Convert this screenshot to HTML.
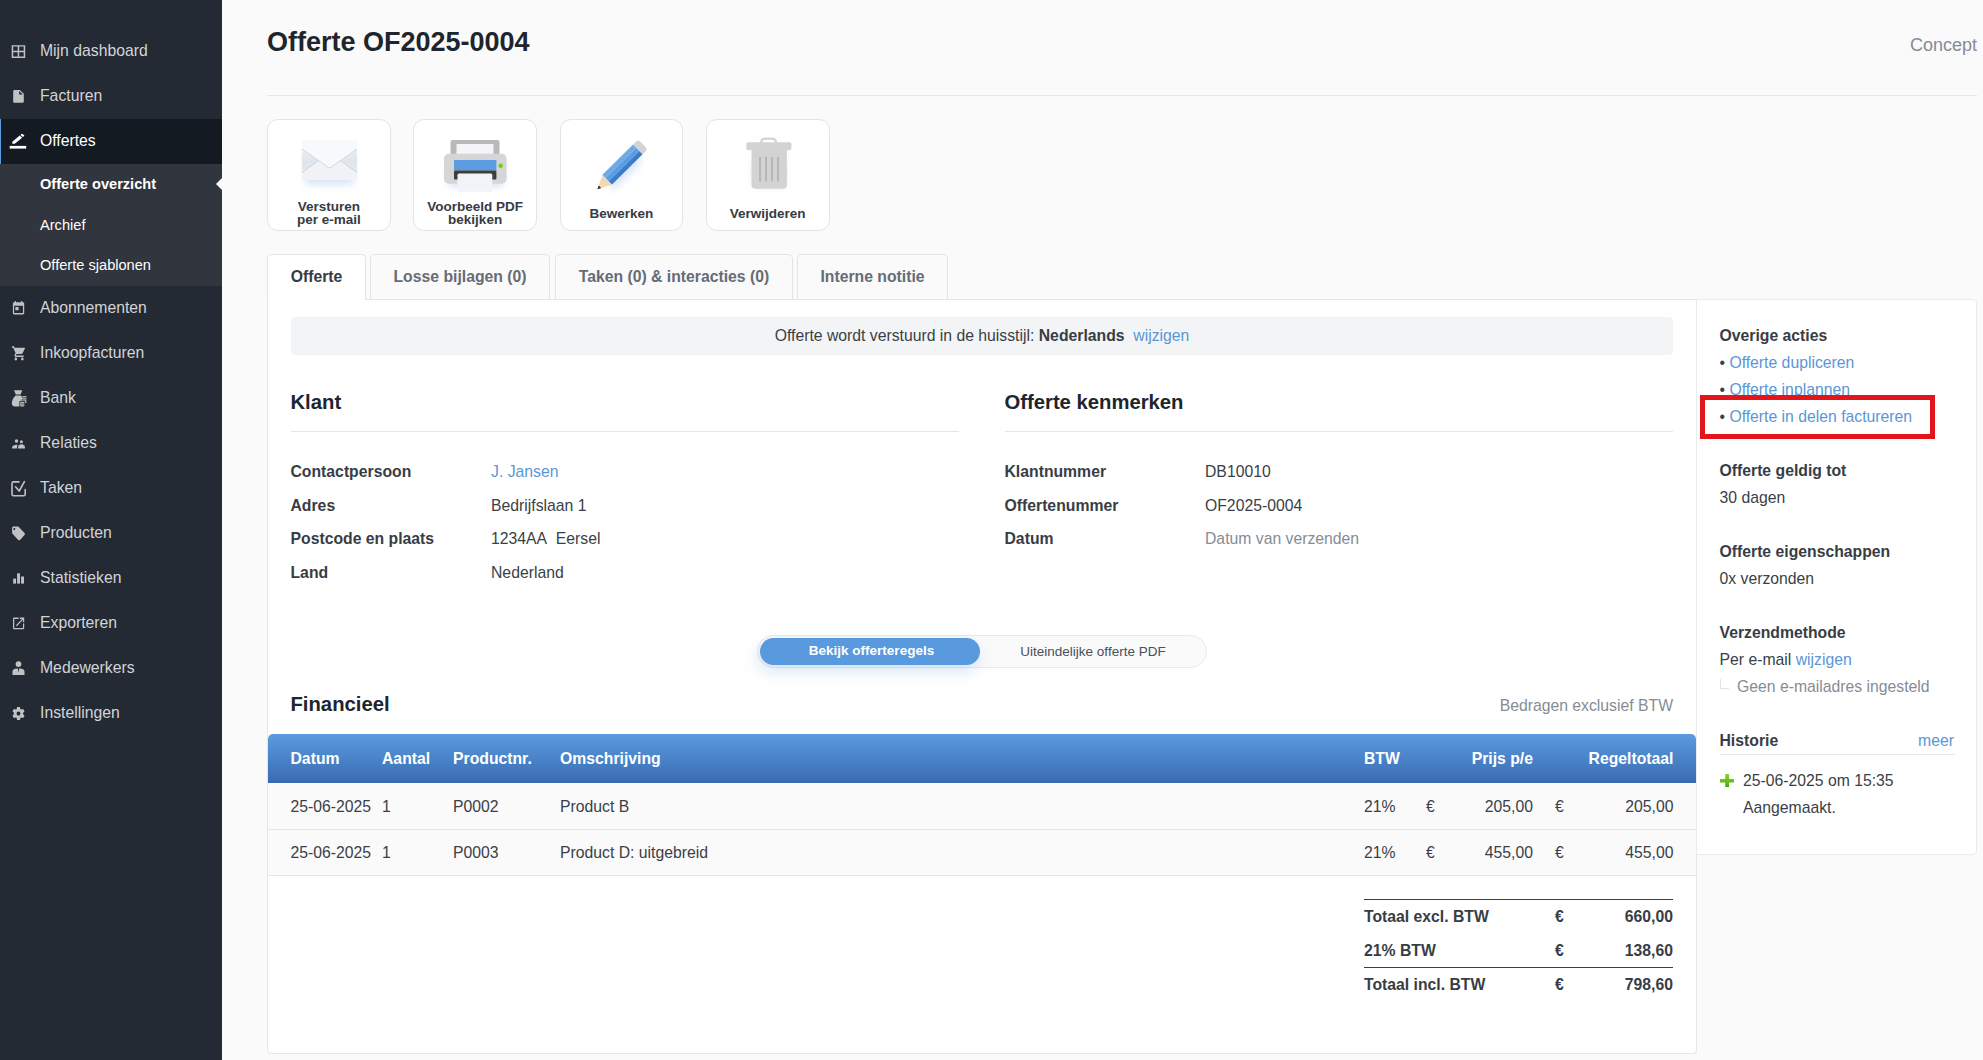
<!DOCTYPE html>
<html lang="nl">
<head>
<meta charset="utf-8">
<title>Offerte OF2025-0004</title>
<style>
*{box-sizing:border-box;margin:0;padding:0}
html,body{width:1983px;height:1060px;overflow:hidden}
body{font-family:"Liberation Sans",Arial,sans-serif;font-size:15.75px;color:#3a3f47;background:#fafafa;position:relative}
a{color:#5b96d6;text-decoration:none}
.abs{position:absolute;white-space:nowrap}
/* sidebar */
#side{position:absolute;left:0;top:0;width:222px;height:1060px;background:#242a33}
#side .it{position:absolute;left:0;width:222px;height:45px;line-height:43px;padding-left:40px;color:#d2d4d7;font-size:15.75px;white-space:nowrap}
#side .it svg{position:absolute;left:0;top:0;width:40px;height:45px;fill:#c0c1c3;stroke:#c0c1c3;stroke-width:0}
#side .act{background:#141a22;color:#fff;border-left:1px solid #5b9be0;padding-left:39px}
#side .act svg{left:-1px;fill:#fff;stroke:#fff}
#sub{position:absolute;left:0;top:164px;width:222px;height:122px;background:#30353e}
#sub div{height:40.5px;line-height:40.5px;padding-left:40px;color:#fff;font-size:14.625px;white-space:nowrap}
#sub .cur{font-weight:700}
#sub:after{content:"";position:absolute;right:0;top:14px;border:6px solid transparent;border-right-color:#fafafa;border-left:0}
/* header */
h1{position:absolute;left:267px;top:27px;font-size:27px;line-height:31px;font-weight:700;color:#20252d;white-space:nowrap}
#status{position:absolute;right:6px;top:35px;font-size:18px;line-height:21px;color:#848b96}
#hr{position:absolute;left:267px;top:95px;width:1710px;height:1px;background:#e6e6e6}
/* cards */
.card{position:absolute;top:119px;width:123.75px;height:112px;background:#fff;border:1px solid #e4e4e4;border-radius:11px;text-align:center;font-weight:700;font-size:13.5px;line-height:13px;color:#363b44}
.card .lbl{position:absolute;left:0;right:0}
.card svg{position:absolute}
/* tabs */
.tab{position:absolute;top:254px;height:46px;border:1px solid #e4e4e4;border-bottom:0;border-radius:5px 5px 0 0;background:#fafafa;font-weight:700;font-size:15.75px;line-height:43px;color:#666c76;text-align:center;white-space:nowrap}
.tab.on{background:#fff;color:#353a42;z-index:3;height:46px}
#main{position:absolute;left:267px;top:299px;width:1430px;height:755px;background:#fff;border:1px solid #e6e6e6;border-radius:0 0 4px 4px}
#right{position:absolute;left:1696px;top:299px;width:281px;height:556px;background:#fff;border:1px solid #ebebeb;border-radius:0 4px 4px 0}
#banner{position:absolute;left:291px;top:317px;width:1382px;height:38px;background:#f3f4f5;border-radius:4px;text-align:center;line-height:37px;color:#3a3f47}
h2{position:absolute;font-size:20.25px;line-height:24px;font-weight:700;color:#20252d;white-space:nowrap}
.ul{position:absolute;height:1px;background:#e6e6e6}
.k{position:absolute;margin-top:1px;font-weight:700;color:#383d45;white-space:nowrap;line-height:20px}
.v{position:absolute;margin-top:1px;white-space:nowrap;line-height:20px;color:#3a3f47}
.g{color:#868c96}
.r{text-align:right}
#toggle{position:absolute;left:757px;top:635px;width:450px;height:33px;border:1px solid #e9e9e9;border-radius:17px;background:#fafafa;font-size:13.500px}
#toggle div{position:absolute;top:2px;height:27px;line-height:27px;text-align:center;white-space:nowrap}
#toggle .on{left:2px;width:220px;border-radius:14px;background:#5999de;color:#fff;font-weight:700;box-shadow:-2px 6px 16px rgba(91,155,224,.26);padding-left:3px;line-height:26px}
#toggle .off{left:222px;width:226px;color:#4a4f58}
#thead{position:absolute;left:268px;top:734px;width:1428px;height:49px;border-radius:5px 5px 0 0;background:linear-gradient(#5b9be0,#386bb2);color:#fff;font-weight:700;line-height:49px}
#thead span,.row span{position:absolute;white-space:nowrap}
.row{position:absolute;left:268px;width:1428px;height:47px;line-height:46px;background:#fafafa;border-bottom:1px solid #e6e6e6;color:#3a3f47}
.tl{position:absolute;left:1364px;width:309px;height:1px;background:#3a3f47}
#red{position:absolute;left:1700px;top:395px;width:235px;height:44px;border:5px solid #e3151a}
</style>
</head>
<body>
<div id="side">
  <div class="it" style="top:29px"><svg viewBox="0 0 40 45"><path transform="translate(9.450 14.083) scale(0.7500 0.7056)" d="M3 3v18h18V3H3zm8 16H5v-6h6v6zm0-8H5V5h6v6zm8 8h-6v-6h6v6zm0-8h-6V5h6v6z"/></svg>Mijn dashboard</div>
  <div class="it" style="top:74px"><svg viewBox="0 0 40 45"><path transform="translate(10.550 14.720) scale(0.6625 0.6400)" d="M6 2c-1.1 0-1.99.9-1.99 2L4 20c0 1.1.89 2 1.99 2H18c1.1 0 2-.9 2-2V8l-6-6H6zm7 7V3.5L18.5 9H13z"/></svg>Facturen</div>
  <div class="it act" style="top:119px"><svg viewBox="0 0 40 45"><path transform="translate(10.300 13.133) scale(0.6667 0.5556)" d="M3 17.25V21h3.75L17.81 9.94l-3.75-3.75L3 17.25zM20.71 7.04c.39-.39.39-1.02 0-1.41l-2.34-2.34c-.39-.39-1.02-.39-1.41 0l-1.83 1.83 3.75 3.75 1.83-1.83z"/><rect x="9.7" y="26.9" width="16.5" height="2.7"/></svg>Offertes</div>
  <div id="sub"><div class="cur">Offerte overzicht</div><div>Archief</div><div>Offerte sjablonen</div></div>
  <div class="it" style="top:285.5px"><svg viewBox="0 0 40 45"><path transform="translate(11.017 14.225) scale(0.6278 0.6750)" d="M7 10h5v5H7zM16 1v2H8V1H6v2H5c-1.11 0-1.99.9-1.99 2L3 19c0 1.1.89 2 2 2h14c1.1 0 2-.9 2-2V5c0-1.1-.9-2-2-2h-1V1h-2zm3 18H5V8h14v11z"/></svg>Abonnementen</div>
  <div class="it" style="top:330.5px"><svg viewBox="0 0 40 45"><path transform="translate(11.248 13.890) scale(0.6520 0.7050)" d="M7 18c-1.1 0-1.99.9-1.99 2S5.9 22 7 22s2-.9 2-2-.9-2-2-2zM1 2v2h2l3.6 7.59-1.35 2.45c-.16.28-.25.61-.25.96 0 1.1.9 2 2 2h12v-2H7.42c-.14 0-.25-.11-.25-.25l.03-.12.9-1.63h7.45c.75 0 1.41-.41 1.75-1.030l3.580-6.490A1.003 1.003 0 0020 4H5.210l-.94-2H1zm16 16c-1.1 0-1.990.9-1.990 2s.890 2 1.990 2 2-.9 2-2-.9-2-2-2z"/></svg>Inkoopfacturen</div>
  <div class="it" style="top:375.5px"><svg viewBox="0 0 40 45"><path d="M14 14.300h8.300l-1.700 4.300h-4.800z"/><path d="M15.600 19.500h5.200c1.100 1 2 2.300 2.600 3.600h-1.700v1.900h-2.300v5.500h-4.200c-2.400 0-3.600-1.500-3.400-3.700.3-2.900 1.800-5.500 3.800-7.300z"/><path d="M22.400 20.100h4v7h-1.500v-2.300h-2.500z" opacity=".85"/><path d="M22.400 21.500h4M22.400 23.100h4" stroke="#242a33" stroke-width=".5" fill="none"/><rect x="20" y="25.700" width="4.300" height="4.800" rx="1.200"/><path d="M20 27.300h4.300M20 28.900h4.300" stroke="#242a33" stroke-width=".5" fill="none"/></svg>Bank</div>
  <div class="it" style="top:420.5px"><svg viewBox="0 0 40 45"><circle cx="16.500" cy="19.900" r="1.750"/><circle cx="21.400" cy="20.800" r="1.550"/><path d="M12.100 27.400v-1.200c0-1.500 2.300-2.500 4.400-2.500.5 0 .9 0 1.300.1-.6.600-.8 1.300-.8 2.100v1.500z"/><path d="M18.100 27.400v-1.400c0-1.600 1.700-2.700 3.400-2.700s3.400 1.100 3.400 2.700v1.400z"/></svg>Relaties</div>
  <div class="it" style="top:465.5px"><svg viewBox="0 0 40 45"><path d="M19 15.900H13.500a1.500 1.500 0 00-1.500 1.500V28.200a1.500 1.500 0 001.500 1.500H23.700a1.500 1.500 0 001.500-1.500V23.500" fill="none" stroke-width="1.600" stroke-linecap="round"/><path d="M15.700 21l3.500 4 5.200-9.300" fill="none" stroke-width="1.700" stroke-linecap="round" stroke-linejoin="round"/></svg>Taken</div>
  <div class="it" style="top:510.5px"><svg viewBox="0 0 40 45"><path transform="translate(10.820 14.120) scale(0.6400 0.6900)" d="M21.41 11.58l-9-9C12.05 2.22 11.55 2 11 2H4c-1.1 0-2 .9-2 2v7c0 .55.22 1.05.59 1.42l9 9c.36.36.86.58 1.41.58.55 0 1.05-.22 1.410-.590l7-7c.370-.360.590-.860.590-1.410 0-.550-.230-1.060-.590-1.420zM5.500 7C4.670 7 4 6.330 4 5.500S4.670 4 5.500 4 7 4.670 7 5.500 6.330 7 5.500 7z"/></svg>Producten</div>
  <div class="it" style="top:555.5px"><svg viewBox="0 0 40 45"><rect x="13.200" y="22.600" width="2.800" height="5"/><rect x="17.100" y="17.300" width="2.900" height="10.300"/><rect x="21.100" y="20.500" width="2.900" height="7.100"/></svg>Statistieken</div>
  <div class="it" style="top:600.5px"><svg viewBox="0 0 40 45"><path transform="translate(11.133 14.650) scale(0.6222 0.6500)" d="M19 19H5V5h7V3H5c-1.110 0-2 .9-2 2v14c0 1.100.890 2 2 2h14c1.100 0 2-.9 2-2v-7h-2v7zM14 3v2h3.590l-9.830 9.830 1.410 1.410L19 6.410V10h2V3h-7z"/></svg>Exporteren</div>
  <div class="it" style="top:645.5px"><svg viewBox="0 0 40 45"><circle cx="18.500" cy="18.100" r="2.900"/><path transform="translate(0 -.5)" d="M12.500 29.400v-3.400c0-1.900 2-3 4.500-3h.9l.6 4.600.6-4.600h.9c2.500 0 4.500 1.100 4.500 3v3.400z"/></svg>Medewerkers</div>
  <div class="it" style="top:690.5px"><svg viewBox="0 0 40 45"><path transform="translate(10.840 14.340) scale(0.6383 0.6800)" d="M19.140 12.940c.04-.3.060-.610.060-.940 0-.320-.020-.640-.070-.940l2.030-1.580a.49.49 0 00.120-.610l-1.920-3.320a.488.488 0 00-.590-.220l-2.390.960c-.5-.380-1.030-.7-1.620-.940l-.360-2.540a.484.484 0 00-.480-.410h-3.840c-.240 0-.430.170-.470.410l-.360 2.540c-.590.240-1.130.570-1.620.940l-2.390-.960c-.220-.080-.470 0-.590.220L2.740 8.870c-.12.210-.08.470.12.610l2.030 1.580c-.05.300-.09.630-.09.940s.02.640.07.940l-2.030 1.580a.49.49 0 00-.12.610l1.920 3.320c.12.220.37.290.59.220l2.390-.96c.5.380 1.030.7 1.620.94l.36 2.540c.05.240.24.410.48.410h3.840c.24 0 .44-.17.470-.41l.36-2.540c.59-.24 1.130-.56 1.620-.94l2.390.96c.22.080.47 0 .59-.22l1.920-3.320c.12-.22.070-.47-.12-.61l-2.010-1.580zM12 15c-1.650 0-3-1.350-3-3s1.350-3 3-3 3 1.350 3 3-1.350 3-3 3z"/></svg>Instellingen</div>
</div>

<h1>Offerte OF2025-0004</h1>
<div id="status">Concept</div>
<div id="hr"></div>

<!-- CARDS -->
<div class="card" style="left:267px">
  <svg style="left:19px;top:9px" width="84" height="70" viewBox="0 0 84 70">
    <defs>
      <linearGradient id="eg" x1="0" y1="0" x2="0" y2="1"><stop offset="0" stop-color="#f8f9fc"/><stop offset="1" stop-color="#eef0f3"/></linearGradient>
      <linearGradient id="es" x1="0" y1="0" x2="0" y2="1"><stop offset="0" stop-color="#f3f5f8"/><stop offset=".55" stop-color="#dfe5ec"/><stop offset="1" stop-color="#eef0f4"/></linearGradient>
      <filter id="sh" x="-30%" y="-30%" width="160%" height="190%"><feGaussianBlur stdDeviation="3.500"/></filter>
    </defs>
    <rect x="18" y="24" width="49" height="32" rx="4" fill="#a9c8ee" opacity=".45" filter="url(#sh)"/>
    <rect x="15" y="11" width="55" height="40" rx="2.500" fill="url(#es)"/>
    <path d="M15 43.500 L35 29 L42.500 35 L50 29 L70 43.500 V48.500 Q70 51 67.500 51 H17.500 Q15 51 15 48.500Z" fill="#f1f2f5"/>
    <path d="M15 43.500 L35 29 M50 29 L70 43.500" stroke="#c4cbd4" stroke-width=".8" fill="none"/>
    <path d="M15 13.500 Q15 11 17.500 11 H67.500 Q70 11 70 13.500 V20 L44 38.300 Q42.500 39.400 41 38.300 L15 20Z" fill="#f8f9fc"/>
    <path d="M15 20 L41 38.300 Q42.500 39.400 44 38.300 L70 20" stroke="#c9d0d9" stroke-width=".8" fill="none"/>
  </svg>
  <div class="lbl" style="top:79.500px">Versturen<br>per e-mail</div>
</div>
<div class="card" style="left:413.250px">
  <svg style="left:19px;top:9px" width="84" height="70" viewBox="0 0 84 70">
    <rect x="15" y="34" width="55" height="24" rx="5" fill="#a9c8ee" opacity=".5" filter="url(#sh)"/>
    <path d="M17.500 13 Q17.500 11 19.500 11 H64.500 Q66.500 11 66.500 13 V26 H17.500Z" fill="#b9b9b9"/>
    <rect x="23.500" y="15" width="37" height="11" rx="1" fill="#f4f5f9"/>
    <rect x="11" y="24.700" width="62.600" height="30" rx="5" fill="#d6d6d6"/>
    <rect x="21" y="31" width="42.400" height="10.500" fill="#5b9be0"/>
    <rect x="21" y="41.500" width="42.400" height="9" rx="1" fill="#3e3e3e"/>
    <rect x="24.500" y="44.500" width="34.800" height="18.200" rx="1.500" fill="#f1f3f9"/>
    <circle cx="67.700" cy="36.700" r="2.300" fill="#6fcf1f"/>
  </svg>
  <div class="lbl" style="top:79.500px">Voorbeeld PDF<br>bekijken</div>
</div>
<div class="card" style="left:559.500px">
  <svg style="left:19px;top:9px" width="84" height="70" viewBox="0 0 84 70">
    <path d="M22 53 L50 25 L60 35 L32 63Z" fill="#a9c8ee" opacity=".45" filter="url(#sh)" transform="translate(2 -2)"/>
    <g transform="translate(17.400 60.300) rotate(-44.600)">
      <path d="M0 0 L13.800 -6.800 V6.800Z" fill="#f1d9b5"/>
      <path d="M0 0 L3.600 -1.800 V1.800Z" fill="#2b2b2b"/>
      <rect x="13.800" y="-6.800" width="43" height="4.500" fill="#6dabe8"/>
      <rect x="13.800" y="-2.300" width="43" height="4.600" fill="#5b9be0"/>
      <rect x="13.800" y="2.300" width="43" height="4.500" fill="#3d7bc8"/>
      <path d="M56.800 -6.800 H60.500 Q64 -6.800 64 -3.300 V3.300 Q64 6.800 60.500 6.800 H56.800Z" fill="#d3d3d3"/>
    </g>
  </svg>
  <div class="lbl" style="top:87px">Bewerken</div>
</div>
<div class="card" style="left:705.750px">
  <svg style="left:19px;top:9px" width="84" height="70" viewBox="0 0 84 70">
    <rect x="27" y="30" width="32" height="28" rx="4" fill="#a9c8ee" opacity=".45" filter="url(#sh)"/>
    <path d="M35 14 Q35 9.700 39.500 9.700 H45.500 Q50 9.700 50 14" fill="none" stroke="#d3d3d3" stroke-width="2.200"/>
    <rect x="20.400" y="13.300" width="45" height="8" rx="2" fill="#d3d3d3"/>
    <path d="M25.500 21 H60.900 V55.500 Q60.900 59.800 56.600 59.800 H29.800 Q25.500 59.800 25.500 55.500Z" fill="#d3d3d3"/>
    <path d="M34 28 V52.500 M40 28 V52.500 M46 28 V52.500 M52 28 V52.500" stroke="#b0b0b0" stroke-width="1.600"/>
  </svg>
  <div class="lbl" style="top:87px">Verwijderen</div>
</div>
<!-- TABS -->
<div class="tab on" style="left:267px;width:99px">Offerte</div>
<div class="tab" style="left:370px;width:180px">Losse bijlagen (0)</div>
<div class="tab" style="left:555px;width:238px">Taken (0) &amp; interacties (0)</div>
<div class="tab" style="left:797px;width:151px">Interne notitie</div>
<!-- MAIN -->
<div id="main"></div>
<div id="banner">Offerte wordt verstuurd in de huisstijl: <b style="color:#383d45">Nederlands</b>&nbsp; <a>wijzigen</a></div>

<h2 style="left:290.500px;top:390px">Klant</h2>
<div class="ul" style="left:290.500px;top:431px;width:668px"></div>
<div class="k" style="left:290.500px;top:461px">Contactpersoon</div><div class="v" style="left:491px;top:461px"><a>J. Jansen</a></div>
<div class="k" style="left:290.500px;top:495px">Adres</div><div class="v" style="left:491px;top:495px">Bedrijfslaan 1</div>
<div class="k" style="left:290.500px;top:528px">Postcode en plaats</div><div class="v" style="left:491px;top:528px">1234AA&nbsp; Eersel</div>
<div class="k" style="left:290.500px;top:562px">Land</div><div class="v" style="left:491px;top:562px">Nederland</div>

<h2 style="left:1004.500px;top:390px">Offerte kenmerken</h2>
<div class="ul" style="left:1004.500px;top:431px;width:668px"></div>
<div class="k" style="left:1004.500px;top:461px">Klantnummer</div><div class="v" style="left:1205px;top:461px">DB10010</div>
<div class="k" style="left:1004.500px;top:495px">Offertenummer</div><div class="v" style="left:1205px;top:495px">OF2025-0004</div>
<div class="k" style="left:1004.500px;top:528px">Datum</div><div class="v g" style="left:1205px;top:528px">Datum van verzenden</div>

<div id="toggle"><div class="on">Bekijk offerteregels</div><div class="off">Uiteindelijke offerte PDF</div></div>

<h2 style="left:290.500px;top:692px">Financieel</h2>
<div class="v g r" style="right:310px;top:695px">Bedragen exclusief BTW</div>

<div id="thead">
  <span style="left:22.500px">Datum</span><span style="left:114px">Aantal</span><span style="left:185px">Productnr.</span><span style="left:292px">Omschrijving</span>
  <span style="left:1096px">BTW</span><span style="right:163px">Prijs p/e</span><span style="right:22.500px">Regeltotaal</span>
</div>
<div class="row" style="top:783px;line-height:48px">
  <span style="left:22.500px">25-06-2025</span><span style="left:114px">1</span><span style="left:185px">P0002</span><span style="left:292px">Product B</span>
  <span style="left:1096px">21%</span><span style="left:1158px">&euro;</span><span style="right:163px">205,00</span><span style="left:1287px">&euro;</span><span style="right:22.500px">205,00</span>
</div>
<div class="row" style="top:830px;height:46px;line-height:45px">
  <span style="left:22.500px">25-06-2025</span><span style="left:114px">1</span><span style="left:185px">P0003</span><span style="left:292px">Product D: uitgebreid</span>
  <span style="left:1096px">21%</span><span style="left:1158px">&euro;</span><span style="right:163px">455,00</span><span style="left:1287px">&euro;</span><span style="right:22.500px">455,00</span>
</div>

<div class="tl" style="top:899px"></div>
<div class="k" style="left:1364px;top:906px">Totaal excl. BTW</div><div class="k" style="left:1555px;top:906px">&euro;</div><div class="k r" style="right:310px;top:906px">660,00</div>
<div class="k" style="left:1364px;top:940px">21% BTW</div><div class="k" style="left:1555px;top:940px">&euro;</div><div class="k r" style="right:310px;top:940px">138,60</div>
<div class="tl" style="top:967px"></div>
<div class="k" style="left:1364px;top:974px">Totaal incl. BTW</div><div class="k" style="left:1555px;top:974px">&euro;</div><div class="k r" style="right:310px;top:974px">798,60</div>
<!-- RIGHT -->
<div id="right"></div>
<div class="k" style="left:1719.500px;top:325px">Overige acties</div>
<div class="v" style="left:1719.500px;top:352px">&bull; <a>Offerte dupliceren</a></div>
<div class="v" style="left:1719.500px;top:379px">&bull; <a>Offerte inplannen</a></div>
<div class="v" style="left:1719.500px;top:406px">&bull; <a>Offerte in delen factureren</a></div>
<div id="red"></div>
<div class="k" style="left:1719.500px;top:460px">Offerte geldig tot</div>
<div class="v" style="left:1719.500px;top:487px">30 dagen</div>
<div class="k" style="left:1719.500px;top:541px">Offerte eigenschappen</div>
<div class="v" style="left:1719.500px;top:568px">0x verzonden</div>
<div class="k" style="left:1719.500px;top:622px">Verzendmethode</div>
<div class="v" style="left:1719.500px;top:649px">Per e-mail <a>wijzigen</a></div>
<div class="abs" style="left:1719.500px;top:679px;width:9px;height:10px;border-left:1px solid #e2e2e2;border-bottom:1px solid #e2e2e2"></div>
<div class="v g" style="left:1737px;top:676px">Geen e-mailadres ingesteld</div>
<div class="k" style="left:1719.500px;top:730px">Historie</div>
<div class="v r" style="right:29px;top:730px"><a>meer</a></div>
<div class="ul" style="left:1719.500px;top:754px;width:235px"></div>
<svg class="abs" style="left:1720px;top:773.5px" width="14.300" height="13.500" viewBox="0 0 15 15" preserveAspectRatio="none"><defs><linearGradient id="pg" x1="0" y1="0" x2="0" y2="1"><stop offset="0" stop-color="#8ad42c"/><stop offset="1" stop-color="#4ea512"/></linearGradient></defs><path d="M5.500 0h4v5.500h5.500v4H9.500v5.500h-4V9.500H0v-4h5.500z" fill="url(#pg)"/></svg>
<div class="v" style="left:1743px;top:770px">25-06-2025 om 15:35</div>
<div class="v" style="left:1743px;top:797px">Aangemaakt.</div>
</body>
</html>
